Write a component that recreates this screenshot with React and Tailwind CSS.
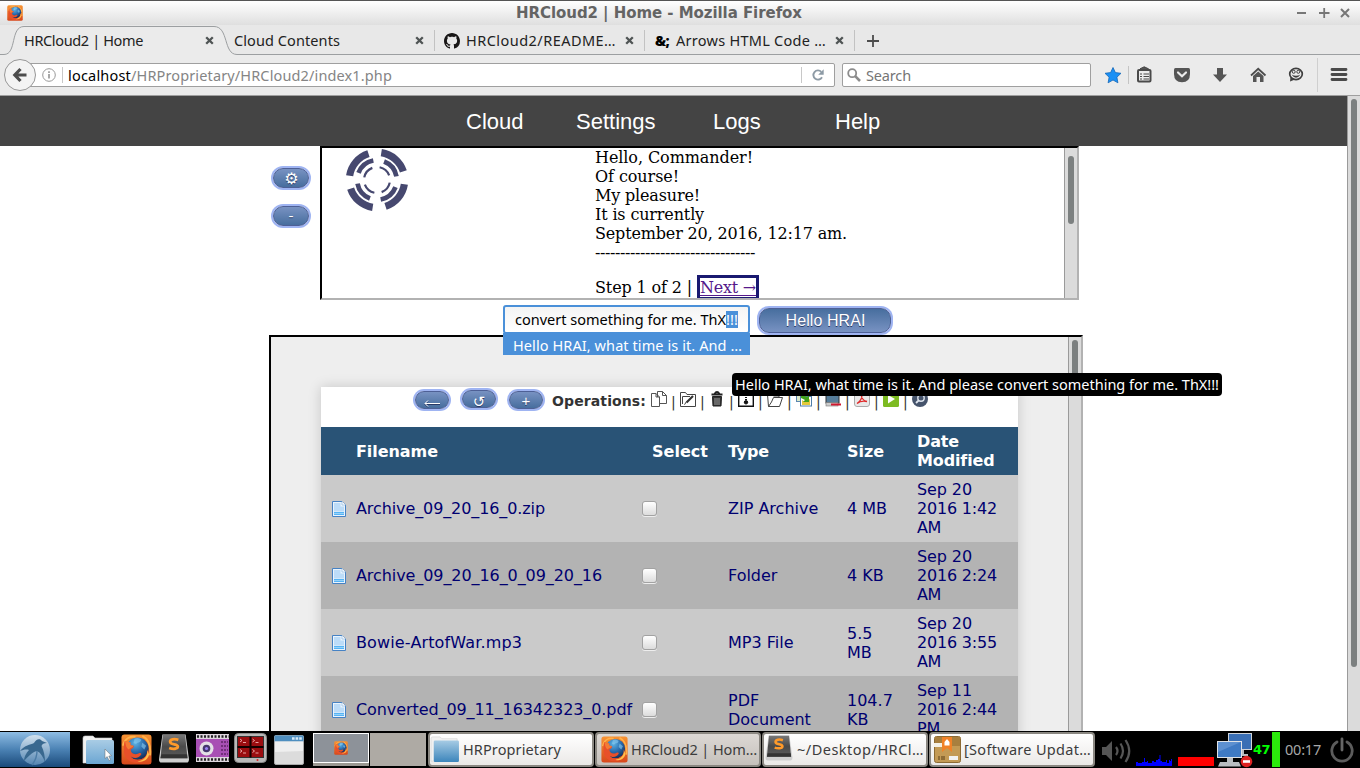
import React, { useLayoutEffect, useRef } from "react";

const UI = "font-['Noto_Sans','Open_Sans',sans-serif]";
const SANS = "font-['DejaVu_Sans',sans-serif]";

// Spreads a label's letters so that it takes exactly `w` pixels.
function Fit({ w, className = "", children }) {
  const ref = useRef(null);
  useLayoutEffect(() => {
    const el = ref.current;
    el.style.letterSpacing = "0px";
    const natural = el.getBoundingClientRect().width;
    el.style.letterSpacing = (w - natural) / el.textContent.length + "px";
  }, [w]);
  return (
    <span ref={ref} className={"inline-block whitespace-pre " + className}>
      {children}
    </span>
  );
}

function FirefoxIcon({ className }) {
  return (
    <svg viewBox="0 0 32 32" className={className}>
      <defs>
        <linearGradient id="ffbg" x1="0" y1="0" x2="0" y2="1">
          <stop offset="0" stopColor="#f79433" />
          <stop offset="1" stopColor="#d8471c" />
        </linearGradient>
        <radialGradient id="ffglobe" cx="0.4" cy="0.25" r="0.8">
          <stop offset="0" stopColor="#5fb4e4" />
          <stop offset="0.5" stopColor="#2a6cae" />
          <stop offset="1" stopColor="#13284f" />
        </radialGradient>
      </defs>
      <rect x="0.5" y="0.5" width="31" height="31" rx="3" fill="url(#ffbg)" />
      <path d="M2 12 C4 4 10 2 15 3 M22 2 C28 5 31 12 30 22" stroke="#ffb24a" strokeWidth="2" fill="none" />
      <circle cx="17" cy="15" r="11.5" fill="url(#ffglobe)" />
      <path d="M14 5 q4 -2 7 1 q-1 3 -4 3 q-2 2 -4 0z M22 9 l4 3 -2 4 -3 -3z" fill="#8accf0" opacity="0.6" />
      <path d="M4 7 C6 9 8 8 10 9 C9 11 10 12 13 12 C14 14 11 15 10 16 C10 20 14 22 18 20 C20 19 21 20 21 21 C19 25 13 26 10 23 C13 28 22 28 26 22 C27 20 27 18 27 16 C30 21 27 30 17 30 C8 30 2 24 3 15 C3 12 3 9 4 7Z" fill="#e8502a" />
      <path d="M4 7 C6 9 8 8 10 9 C9 11 10 12 13 12 C12 14 9 14 8 16 C5 14 5 11 4 7Z" fill="#f47b35" />
      <path d="M27 17 C28 23 23 28 17 28 C22 30 28 27 29 21z" fill="#ffc04a" />
    </svg>
  );
}

function SublimeIcon({ className }) {
  return (
    <svg viewBox="0 0 32 30" className={className}>
      <defs>
        <linearGradient id="subl" x1="0" y1="0" x2="0" y2="1">
          <stop offset="0" stopColor="#777" />
          <stop offset="0.5" stopColor="#4a4a4a" />
          <stop offset="1" stopColor="#5b5b5b" />
        </linearGradient>
      </defs>
      <path d="M4 0.5 H28 L31.5 26 Q31.5 29.5 29 29.5 H3 Q0.5 29.5 0.5 26Z" fill="#cfcfcf" />
      <path d="M4.5 1 H27.5 L30 25 H2Z" fill="url(#subl)" />
      <path d="M3 21 H29.5 L30 25 H2Z" fill="#333" />
      <path d="M20.5 6 C16 4.500 12 5.500 12 8 C12 11.500 20 10 20 13 C20 15.500 15 16 11 14.500" stroke="#ff9a2a" strokeWidth="2.900" fill="none" />
    </svg>
  );
}

function FolderIcon({ className, cursor }) {
  return (
    <svg viewBox="0 0 33 30" className={className}>
      <defs>
        <linearGradient id="fold" x1="0" y1="0" x2="0" y2="1">
          <stop offset="0" stopColor="#a6cbe4" />
          <stop offset="1" stopColor="#3c85bb" />
        </linearGradient>
        <linearGradient id="foldpale" x1="0" y1="0" x2="0" y2="1">
          <stop offset="0" stopColor="#a9cce5" />
          <stop offset="1" stopColor="#6ba6d2" />
        </linearGradient>
      </defs>
      <path d="M1 3 Q1 1 3 1 H11 L13 3 H30 V10 H6 V28 H1Z" fill="#f1f1f1" stroke="#cfcfcf" strokeWidth="0.6" />
      <rect x="4" y="5" width="28" height="24" rx="1.500" fill={cursor ? "url(#foldpale)" : "url(#fold)"} />
      {cursor && <path d="M23 14 L23 23.500 L25.200 21.600 L27 25.500 L28.500 24.800 L26.800 21 L29.500 20.800Z" fill="#fff" stroke="#666" strokeWidth="0.500" />}
    </svg>
  );
}

const CloseX = () => (
  <svg viewBox="0 0 9 9" className="h-[9px] w-[9px] shrink-0">
    <path d="M1.200 1.200 L7.800 7.800 M7.800 1.200 L1.200 7.800" stroke="#4f5454" strokeWidth="2.300" />
  </svg>
);

function TitleBar() {
  return (
    <div className="flex h-[25px] shrink-0 items-center border-t border-[#555] bg-linear-to-b from-white to-[#dfdfdf] pr-[9px] pl-[7px]">
      <FirefoxIcon className="h-4 w-4" />
      <div className={"ml-[493px] w-[290px] text-[15px] leading-6 font-bold text-[#646464] " + SANS}>
        <Fit w={286}>HRCloud2 | Home - Mozilla Firefox</Fit>
      </div>
      <svg viewBox="0 0 54 12" className="ml-auto h-3 w-[54px]">
        <path d="M0 6 H9 M22 6 H32.500 M27.200 1 V11" stroke="#777" strokeWidth="1.800" fill="none" />
        <path d="M44 2 L52 10 M52 2 L44 10" stroke="#777" strokeWidth="2" fill="none" />
      </svg>
    </div>
  );
}

function TabStrip() {
  return (
    <div className={"relative h-[30px] shrink-0 bg-[#e8e8e8] text-[14.500px] text-[#222] " + UI}>
      <svg viewBox="0 0 1360 30" className="absolute inset-0 h-[30px] w-[1360px]">
        <path d="M0 29.500 H4 C17 29.500 10 1.500 24 1.500 H214 C229 1.500 223 29.500 237 29.500 H1360 V31 H0Z" fill="#ebebeb" />
        <path d="M0 29.500 H4 C17 29.500 10 1.500 24 1.500 H214 C229 1.500 223 29.500 237 29.500 H1360" fill="none" stroke="#9c9fa1" />
        <path d="M434.500 5 V26 M644.500 5 V26 M854.500 5 V26" stroke="#c2c2c2" />
      </svg>
      <div className="relative flex h-[31px] items-center pl-6">
        <div className="flex w-[210px] items-center">
          <div className="w-[181px]"><Fit w={119}>HRCloud2 | Home</Fit></div>
          <CloseX />
        </div>
        <div className="flex w-[210px] items-center">
          <div className="w-[181px]"><Fit w={106}>Cloud Contents</Fit></div>
          <CloseX />
        </div>
        <div className="flex w-[210px] items-center">
          <svg viewBox="0 0 16 16" className="h-4 w-4">
            <path fill="#181616" d="M8 0C3.580 0 0 3.580 0 8c0 3.540 2.290 6.530 5.470 7.590.4.070.55-.17.55-.38 0-.19-.01-.82-.01-1.490-2.010.37-2.530-.49-2.690-.94-.09-.23-.48-.94-.82-1.130-.28-.15-.68-.52-.01-.53.63-.01 1.080.58 1.230.82.72 1.210 1.870.87 2.330.66.07-.52.28-.87.51-1.070-1.780-.2-3.640-.89-3.640-3.950 0-.87.31-1.590.82-2.150-.08-.2-.36-1.020.08-2.120 0 0 .67-.21 2.200.82.64-.18 1.320-.27 2-.27s1.360.09 2 .27c1.530-1.040 2.200-.82 2.200-.82.44 1.100.16 1.920.08 2.120.51.56.82 1.270.82 2.150 0 3.070-1.870 3.750-3.650 3.950.29.25.54.73.54 1.480 0 1.070-.01 1.930-.01 2.200 0 .21.15.46.55.38A8.010 8.010 0 0 0 16 8c0-4.420-3.580-8-8-8z" />
          </svg>
          <div className="ml-[6px] w-[159px]"><Fit w={150}>HRCloud2/README…</Fit></div>
          <CloseX />
        </div>
        <div className="flex w-[210px] items-center">
          <span className="w-[22px] pl-px text-[14px] font-black text-black"><Fit w={14}>&amp;;</Fit></span>
          <div className="w-[159px]"><Fit w={150}>Arrows HTML Code …</Fit></div>
          <CloseX />
        </div>
        <svg viewBox="0 0 12 12" className="ml-[3px] h-3 w-3">
          <path d="M6 0 V12 M0 6 H12" stroke="#4c4c4c" strokeWidth="1.800" />
        </svg>
      </div>
    </div>
  );
}

function NavBar() {
  return (
    <div className={"flex h-[41px] shrink-0 items-center border-b border-[#9f9f9f] bg-[#ebebeb] text-[14.500px] " + UI}>
      <div className="z-10 ml-1 flex h-8 w-8 items-center justify-center rounded-full border border-[#979797] bg-[#f3f3f3]">
        <svg viewBox="0 0 16 16" className="h-4 w-4">
          <path d="M8.500 2 L2.800 8 L8.500 14 M3 8 H14.500" stroke="#4c4c4c" strokeWidth="3.200" fill="none" />
        </svg>
      </div>
      <div className="-ml-2 flex h-6 w-[807px] items-center rounded-xs border border-[#9f9f9f] bg-white pl-[13px]">
        <svg viewBox="0 0 14 14" className="h-[14px] w-[14px]">
          <circle cx="7" cy="7" r="6.300" fill="none" stroke="#999" />
          <path d="M7 6 V10.500 M7 3.300 V4.900" stroke="#999" strokeWidth="1.700" />
        </svg>
        <div className="ml-[6px] h-4 w-px bg-[#c8c8c8]" />
        <div className="ml-[5px] flex items-center pt-px">
          <Fit w={63} className="text-black">localhost</Fit>
          <Fit w={261} className="text-[#858585]">/HRProprietary/HRCloud2/index1.php</Fit>
        </div>
        <div className="ml-auto h-4 w-px bg-[#c8c8c8]" />
        <svg viewBox="0 0 12 12" className="mr-[10px] ml-[10px] h-3 w-3">
          <path d="M10 8.300 A4.600 4.600 0 1 1 9.300 2.800" fill="none" stroke="#8d9aa5" strokeWidth="1.900" />
          <path d="M11.700 0.300 V5.800 H6.200Z" fill="#8d9aa5" />
        </svg>
      </div>
      <div className="ml-[7px] flex h-6 w-[249px] items-center rounded-xs border border-[#9f9f9f] bg-white pl-1">
        <svg viewBox="0 0 14 14" className="h-[14px] w-[14px]">
          <circle cx="5.200" cy="5.200" r="4" fill="none" stroke="#8c8c8c" strokeWidth="1.800" />
          <path d="M8.200 8.200 L13 13" stroke="#8c8c8c" strokeWidth="2.600" />
        </svg>
        <Fit w={45} className="ml-[5px] pt-px text-[#757575]">Search</Fit>
      </div>
      <svg viewBox="0 0 260 40" className="ml-[9px] h-10 w-[260px]">
        <path d="M13 12.500 L15.400 17.600 L21 18.300 L16.900 22.200 L17.900 27.800 L13 25 L8.100 27.800 L9.100 22.200 L5 18.300 L10.600 17.600Z" fill="#1a90f5" stroke="#1467b8" strokeWidth="0.800" />
        <path d="M28.500 11 V29" stroke="#c4c4c4" />
        <g fill="none" stroke="#4a4a4a">
          <rect x="38" y="15" width="12.500" height="11.500" rx="1" strokeWidth="2" />
          <path d="M40 19 H42 M43.500 19 H49 M40 21.500 H42 M43.500 21.500 H49 M40 24 H42 M43.500 24 H49" strokeWidth="1.200" />
          <path d="M40 13.800 H48.500 L44.200 11.800Z" fill="#4a4a4a" />
        </g>
        <path d="M74 14.500 Q74 13 75.500 13 H88.500 Q90 13 90 14.500 V19 Q90 27 82 27.300 Q74 27 74 19Z" fill="#555" />
        <path d="M78 17.500 L82 21.300 L86 17.500" stroke="#ececec" strokeWidth="2.200" fill="none" strokeLinecap="round" />
        <path d="M117 13 H123 V19.500 H127 L120 27 L113 19.500 H117Z" fill="#555" />
        <path d="M151 20.500 L158.200 13.800 L165.500 20.500" fill="none" stroke="#4c4c4c" strokeWidth="1.800" />
        <path d="M153 21 L158.200 16.500 L163.500 21 V27 H160 V22 H156.500 V27 H153Z" fill="#555" />
        <ellipse cx="196" cy="19" rx="6.300" ry="5.600" fill="none" stroke="#3f3f3f" strokeWidth="1.700" />
        <path d="M190.500 22 L190 26.500 L195 24.500Z" fill="#3f3f3f" />
        <path d="M191.500 19.500 Q196 26 200.500 19.500 Q196 22 191.500 19.500Z" fill="#3f3f3f" />
        <circle cx="193.700" cy="16.800" r="1.500" fill="none" stroke="#3f3f3f" />
        <circle cx="198.300" cy="16.800" r="1.500" fill="none" stroke="#3f3f3f" />
        <path d="M217.500 3 V37" stroke="#cfcfcf" />
        <path d="M232 14.500 H246 M232 19.500 H246 M232 24.500 H246" stroke="#4a4a4a" strokeWidth="2.800" strokeLinecap="round" />
      </svg>
    </div>
  );
}

function Pill({ className = "", children }) {
  return (
    <button
      className={
        "flex shrink-0 items-center justify-center rounded-[10px] border border-[#4e6096] text-white shadow-[0_0_0_2px_#9fb4f2] [text-shadow:0_1px_0_#283966] " +
        className
      }
    >
      {children}
    </button>
  );
}

const SMALL = "bg-linear-to-b from-[#7892c2] to-[#476e9e] ";

function AssistantFrame() {
  const serif = "font-['DejaVu_Serif',serif]";
  return (
    <div className="flex h-[154px] w-[759px] border-2 border-t-black border-r-[#b2b2b2] border-b-[#b2b2b2] border-l-black bg-white">
      <div className="flex min-w-0 flex-1 overflow-hidden">
        <svg viewBox="-32 -32 64 64" className="ml-[23px] h-16 w-16 shrink-0" fill="none" stroke="#46486f">
          <circle r="27.700" pathLength="360" strokeWidth="7.200" strokeDasharray="63 27" strokeDashoffset="-9" />
          <circle r="19.800" pathLength="360" strokeWidth="4.700" strokeDasharray="58 32" strokeDashoffset="-21" />
          <circle r="13" pathLength="360" strokeWidth="2.200" strokeDasharray="57 33" strokeDashoffset="-12" />
        </svg>
        <div className={"ml-[186px] text-[16px] leading-[19px] whitespace-nowrap text-black " + serif}>
          <p><Fit w={158}>Hello, Commander!</Fit></p>
          <p><Fit w={84}>Of course!</Fit></p>
          <p><Fit w={105}>My pleasure!</Fit></p>
          <p><Fit w={109}>It is currently</Fit></p>
          <p><Fit w={252}>September 20, 2016, 12:17 am.</Fit></p>
          <p><Fit w={160}>--------------------------------</Fit></p>
          <div className="mt-[13px] flex">
            <span className="pt-[3px] whitespace-pre"><Fit w={102}>Step 1 of 2 | </Fit></span>
            <span className="border-[3px] border-[#191970] text-[#551a8b]"><Fit w={56} className="underline underline-offset-2">Next →</Fit></span>
          </div>
        </div>
      </div>
      <div className="w-[13px] border-l border-[#9a9a9a] bg-[#dbdbdb] pt-2 pl-[3px]">
        <div className="h-[68px] w-[6px] rounded-full bg-[#7c8080]" />
      </div>
    </div>
  );
}

const FILES = [
  ["Archive_09_20_16_0.zip", 189, "ZIP Archive", "4 MB", [["Sep 20", 55], ["2016 1:42", 80], ["AM", 24]]],
  ["Archive_09_20_16_0_09_20_16", 246, "Folder", "4 KB", [["Sep 20", 55], ["2016 2:24", 80], ["AM", 24]]],
  ["Bowie-ArtofWar.mp3", 166, "MP3 File", "5.5 MB", [["Sep 20", 55], ["2016 3:55", 80], ["AM", 24]]],
  ["Converted_09_11_16342323_0.pdf", 276, "PDF Document", "104.7 KB", [["Sep 11", 55], ["2016 2:44", 80], ["PM", 23]]],
];

const OPS = [
  <g key="copy" fill="#fff" stroke="#555">
    <path d="M6.500 0.500 H11.500 L15.500 4.500 V12.500 H6.500Z M11.500 0.500 V4.500 H15.500" />
    <path d="M0.500 2.500 H5 L8.500 6 V15.500 H0.500Z M5 2.500 V6 H8.500" />
  </g>,
  <g key="edit" fill="none" stroke="#444">
    <path d="M0.500 15.500 V1.500 H5.500 L7 3.500 H15.500 V15.500Z M2.500 13 V5.500 H10" />
    <path d="M6.500 11.500 L13 5" strokeWidth="2.200" stroke="#333" />
    <path d="M4.500 13.700 L6.200 11" />
  </g>,
  <g key="trash" fill="none" stroke="#222">
    <path d="M2.500 3.500 H13.500 M5.500 3 Q8 -1 10.500 3" strokeWidth="1.800" />
    <path d="M3.500 5.500 H12.500 L12 15 H4Z" fill="#333" />
    <path d="M6 7 V14 M8 7 V14 M10 7 V14" stroke="#bbb" strokeWidth="0.800" />
  </g>,
  <g key="zip" fill="none" stroke="#111">
    <path d="M0.700 3 H15.300 V15.300 H0.700Z" strokeWidth="1.400" />
    <path d="M8 4 V9" strokeWidth="2" strokeDasharray="1 1" />
    <circle cx="8" cy="11.300" r="1.700" fill="#111" />
  </g>,
  <path key="open" d="M1.500 15.500 L0.500 3.500 H5 L6.500 5 H12 V6.500 M1.500 15.500 H12.500 L15.500 6.500 H6.500 L4.500 11 L1.500 15.500" fill="none" stroke="#444" />,
  <g key="image">
    <rect x="0.500" y="1.500" width="11" height="9" fill="#dce9c8" stroke="#5b86b0" />
    <rect x="4.500" y="5.500" width="11" height="9.500" fill="#fff" stroke="#4f7da8" />
    <path d="M6 14 V9 L9 11 L14 8 V14Z" fill="#e4c93b" />
    <path d="M5 3 L11 6 L13 4 L13 11 L7 11 L9 9 L5 7Z" fill="#3fa01b" />
  </g>,
  <g key="scan">
    <rect x="1" y="2" width="13" height="10" fill="#567d9a" stroke="#333" />
    <rect x="1" y="11.500" width="12" height="3.500" fill="#ccc" stroke="#777" strokeWidth="0.600" />
    <path d="M6 13.500 H16" stroke="#d01830" strokeWidth="2" />
  </g>,
  <g key="pdf">
    <rect x="0.500" y="0.500" width="15" height="15" rx="2.500" fill="#e9e9e9" stroke="#aaa" />
    <path d="M3 12.500 C7 10 8.500 6 7.500 3.500 C7 6 9 10 13 10.500 C9 9.500 5.500 10.500 3 12.500Z" fill="none" stroke="#e02a2a" strokeWidth="1.300" />
  </g>,
  <g key="play">
    <rect width="16" height="16" rx="1.500" fill="#7dbb22" />
    <path d="M5 4 L12 8 L5 12.500Z" fill="#fff" />
  </g>,
  <g key="search">
    <circle cx="8" cy="8" r="8" fill="#46546c" />
    <circle cx="9" cy="7" r="3.200" fill="none" stroke="#dfe5ee" strokeWidth="1.400" />
    <path d="M6.700 9.300 L4 12" stroke="#dfe5ee" strokeWidth="1.800" />
  </g>,
];

const COLS = "grid grid-cols-[35px_286px_86px_119px_70px_101px] items-center";

function FilesFrame() {
  return (
    <div className="ml-[269px] flex h-[396px] w-[814px] border-2 border-b-0 border-t-black border-r-[#b2b2b2] border-l-black bg-[#eee]">
      <div className={"min-w-0 flex-1 overflow-hidden pt-[50px] pl-[50px] text-[16px] leading-[19px] " + SANS}>
        <div className="h-[420px] w-[697px] bg-white shadow-[0_0_12px_rgba(0,0,0,0.17)]">
          <div className="flex h-10 items-start pl-[94px] text-[16px]">
            <Pill className={SMALL + "mt-1 mr-[13px] h-[18px] w-[34px]"}>
              <svg viewBox="0 0 16 8" className="mt-[7px] h-2 w-4">
                <path d="M4 1.500 L1 4.500 L4 7.500 M1 4.500 H16" stroke="#283966" fill="none" />
                <path d="M4 0.500 L1 3.500 L4 6.500 M1 3.500 H16" stroke="#fff" fill="none" />
              </svg>
            </Pill>
            <Pill className={SMALL + "mt-[3px] mr-[13px] h-[18px] w-[34px] pt-[6px] text-[15px] leading-none"}>↺</Pill>
            <Pill className={SMALL + "mt-1 mr-[9px] h-[18px] w-[34px] pt-px font-['Liberation_Sans'] text-[15px] leading-none"}>+</Pill>
            <div className="mt-[5px] w-[99px] text-[14px] font-bold text-[#333]"><Fit w={94}>Operations:</Fit></div>
            <div className="mt-1 flex">
              {OPS.map((art, i) => (
                <div key={i} className="flex w-[29px] items-start">
                  <svg viewBox="0 0 16 16" className="h-4 w-4 shrink-0">{art}</svg>
                  {i < OPS.length - 1 && <span className="ml-1 pt-[3px] text-[14px] leading-[16px] text-[#333]">|</span>}
                </div>
              ))}
            </div>
          </div>
          <div className={COLS + " h-12 bg-[#295376] font-bold text-white"}>
            <span />
            <span><Fit w={82}>Filename</Fit></span>
            <span className="pl-[10px]"><Fit w={56}>Select</Fit></span>
            <span><Fit w={41}>Type</Fit></span>
            <span><Fit w={37}>Size</Fit></span>
            <span><Fit w={42}>Date</Fit><br /><Fit w={77}>Modified</Fit></span>
          </div>
          {FILES.map(([name, w, type, size, date], i) => (
            <div key={name} className={COLS + " h-[67px] text-[#000070] " + (i % 2 ? "bg-[#b3b3b3]" : "bg-[#cacaca]")}>
              <svg viewBox="0 0 14 16" className="mt-px ml-[11px] h-4 w-[14px]">
                <path d="M0.500 0.500 H10 L13.500 4 V15.500 H0.500Z" fill="#eaf4fd" stroke="#4682c4" />
                <path d="M2 2 H8.500 V5.500 H12 V10.500 H2Z" fill="#bcdcf8" />
                <path d="M10 0.500 V4 H13.500" fill="#fff" stroke="#8fb8e0" strokeWidth="0.700" />
                <path d="M2 11 H12 V14 H2Z" fill="#55b4f5" />
                <path d="M2 12.500 H12" stroke="#b5e0fb" strokeWidth="0.700" />
              </svg>
              <span><Fit w={w}>{name}</Fit></span>
              <span className="block h-[15px] w-[15px] rounded-[3px] border border-[#a2a2a2] bg-linear-to-b from-white to-[#dcdcdc] shadow-[0_1px_0_#eee]" />
              <span className="pr-7">{type}</span>
              <span className="pr-4">{size}</span>
              <span>{date.map(([d, dw]) => <span key={d} className="block"><Fit w={dw}>{d}</Fit></span>)}</span>
            </div>
          ))}
        </div>
      </div>
      <div className="w-[13px] border-l border-[#9a9a9a] bg-[#dbdbdb] pt-[3px] pl-[3px]">
        <div className="h-[50px] w-[6px] rounded-full bg-[#7c8080]" />
      </div>
    </div>
  );
}

function Page() {
  return (
    <div className="relative h-[635px] w-[1347px] overflow-hidden bg-white">
      <nav className="flex h-[50px] items-center bg-[#444] pl-[466px] font-['Liberation_Sans',Arial,sans-serif] text-[22px] text-white">
        <span className="w-[110px]">Cloud</span>
        <span className="w-[137px]">Settings</span>
        <span className="w-[122px]">Logs</span>
        <span>Help</span>
      </nav>
      <div className={"flex pl-[273px] " + SANS}>
        <div className="w-[47px] pt-[22px]">
          <Pill className={SMALL + "h-5 w-9 text-[16px]"}>
            <span className="pt-[2px] pl-px">⚙</span>
          </Pill>
          <Pill className={SMALL + "mt-[18px] h-5 w-9 font-['Liberation_Sans'] text-[15px]"}>-</Pill>
        </div>
        <AssistantFrame />
      </div>
      <div className="flex h-[35px] pt-[5px] pl-[503px]">
        <div className={"relative h-[30px] w-[247px] text-[14.500px] " + UI}>
          <div className="flex h-[29px] items-center rounded-[3px] border-2 border-[#4a90d9] bg-linear-to-b from-[#f4f4f4] to-white pl-[10px] text-black">
            <Fit w={211}>convert something for me. ThX</Fit>
            <span className="inline-block h-[17px] bg-[#4a90d9] leading-[17px] text-white"><Fit w={12}>!!!</Fit></span>
          </div>
          <div className="absolute top-[28px] left-0 z-20 h-[22px] w-[247px] bg-[#4a90d9] pl-[10px] leading-[24px] text-white">
            <Fit w={229}>Hello HRAI, what time is it. And …</Fit>
          </div>
        </div>
        <Pill className="mt-[3px] ml-[9px] h-[25px] w-[132px] bg-linear-to-b from-[#476e9e] to-[#7892c2] font-['Liberation_Sans',Arial,sans-serif] text-[16px]">
          <Fit w={81} className="pl-px">Hello HRAI</Fit>
        </Pill>
      </div>
      <FilesFrame />
      <div className={"absolute top-[277px] left-[732px] z-30 h-[23px] w-[490px] rounded-[4px] bg-black pl-[3px] text-[14.500px] leading-[23px] text-white " + UI}>
        <Fit w={484}>Hello HRAI, what time is it. And please convert something for me. ThX!!!</Fit>
      </div>
    </div>
  );
}

function Task({ icon, label, w, active, className = "" }) {
  return (
    <div
      className={
        "flex h-[35px] items-center overflow-hidden rounded-[4px] border-2 border-[#8a8781] pl-1 text-[14.500px] text-[#3c3c3c] " +
        (active ? "bg-linear-to-b from-[#dcd8d4] to-[#c6c1bc] " : "bg-linear-to-b from-white to-[#ebe9e7] ") +
        className
      }
    >
      {icon}
      <Fit w={w} className="ml-[3px]">{label}</Fit>
    </div>
  );
}

function Taskbar() {
  return (
    <div className={"flex h-[37px] shrink-0 items-center bg-black " + UI}>
      <div className="flex h-[35px] w-[70px] items-center justify-center bg-linear-to-b from-[#8fbde4] via-[#4b82b4] to-[#1a4a7a]">
        <svg viewBox="0 0 32 32" className="h-8 w-8">
          <defs>
            <linearGradient id="disc" x1="0" y1="0" x2="0" y2="1">
              <stop offset="0" stopColor="#dfe9f1" />
              <stop offset="1" stopColor="#5f8fba" />
            </linearGradient>
          </defs>
          <circle cx="16" cy="16" r="15" fill="url(#disc)" opacity="0.850" />
          <path d="M1 17 C6 11 11 11 15 9 C17 5 21 4 23 7 L28 9 C25 9 23 10 22.500 12 C25 17 26 22 26 28 C24 23 22 19 18 17 C13 18 8 24 5 27 C5 23 7 19 10 16 C7 15 4 16 1 17Z" fill="#39688f" />
          <path d="M18 17 C18 22 16 27 13 31" stroke="#4b7ba5" strokeWidth="1.400" fill="none" />
        </svg>
      </div>
      <FolderIcon cursor className="ml-3 h-[30px] w-[33px]" />
      <FirefoxIcon className="ml-[6px] h-[31px] w-[31px]" />
      <SublimeIcon className="-mt-[3px] ml-[6px] h-[29px] w-[32px]" />
      <svg viewBox="0 0 33 28" className="-mt-[3px] ml-[6px] h-7 w-[33px]">
        <rect width="33" height="28" fill="#ded6de" />
        <path d="M1 2.500 H33 M1 25.500 H33" stroke="#222" strokeWidth="2.600" strokeDasharray="2 1.500" />
        <rect x="0" y="5" width="33" height="18" fill="#a84fb4" />
        <path d="M25 8 H32 M25 12 H32 M25 16 H32 M25 20 H32" stroke="#602468" strokeWidth="1.500" strokeDasharray="2 1" />
        <circle cx="10.500" cy="14.500" r="7" fill="#e4e0e6" />
        <circle cx="10.500" cy="14.500" r="3.800" fill="#45366e" />
        <circle cx="10.500" cy="14.500" r="1.600" fill="#9a83f5" />
      </svg>
      <svg viewBox="0 0 33 30" className="-mt-[3px] ml-[5px] h-[30px] w-[33px]">
        <rect x="0.500" y="0.500" width="32" height="29" rx="4" fill="#b9b9b9" stroke="#888" />
        <rect x="3.500" y="3.500" width="26" height="21" fill="#9b0d10" stroke="#333" />
        <path d="M16.500 3.500 V24.500 M3.500 14 H29.500" stroke="#140000" strokeWidth="2" />
        <path d="M6 6 L8 7.500 L6 9 M18.500 6 L20.500 7.500 L18.500 9 M6 16.500 L8 18 L6 19.500 M18.500 16.500 L20.500 18 L18.500 19.500 M9 9.500 H12 M21.500 9.500 H24.500 M9 20 H12 M21.500 20 H24.500" stroke="#f2b3b3" strokeWidth="0.900" fill="none" />
        <circle cx="23.500" cy="27" r="1" fill="#d22" />
      </svg>
      <svg viewBox="0 0 30 30" className="ml-[7px] h-[30px] w-[30px]">
        <rect x="0.500" y="0.500" width="29" height="29" rx="1.500" fill="#dcdcdc" stroke="#aaa" />
        <rect x="0.500" y="0.500" width="29" height="6" fill="#4f8fc0" />
        <path d="M18 3.500 H28" stroke="#d9ebf8" strokeWidth="2.400" strokeDasharray="2.600 1" />
        <path d="M1 6.500 H29 V16 L1 17Z" fill="#efefef" />
      </svg>
      <div className="ml-[9px] flex h-[33px] w-[56px] flex-col border-b-[3px] border-[#9b9892]">
        <div className="flex h-[30px] items-center justify-center border border-white bg-[#8d9299]">
          <FirefoxIcon className="h-[14px] w-[14px]" />
        </div>
      </div>
      <div className="ml-px h-[33px] w-[56px] bg-[#aeaaa4]" />
      <Task className="ml-[2px] w-[166px]" w={98} label="HRProprietary" icon={<FolderIcon className="-ml-1 h-[27px] w-[30px] shrink-0" />} />
      <Task className="ml-px w-[166px]" active w={126} label="HRCloud2 | Hom…" icon={<FirefoxIcon className="h-[27px] w-[27px] shrink-0" />} />
      <Task className="ml-px w-[166px]" w={127} label="~/Desktop/HRCl…" icon={<SublimeIcon className="-mt-1 -ml-1 h-[26px] w-[30px] shrink-0" />} />
      <Task
        className="ml-px w-[166px]"
        w={127}
        label="[Software Updat…"
        icon={
          <svg viewBox="0 0 27 27" className="-ml-px h-[27px] w-[27px] shrink-0">
            <rect x="0.500" y="0.500" width="26" height="26" rx="2" fill="#c39a55" stroke="#8c6a33" />
            <rect x="1" y="1" width="25" height="9" fill="#a87f3e" />
            <rect x="0" y="7" width="8" height="4" fill="#f4f0e6" />
            <path d="M8 1 H18 V16 L13 12 L8 16Z" fill="#f08228" />
            <path d="M13 3 L15.500 6 V9.500 H10.500 V6Z" fill="#fff" />
            <path d="M5 20 V24 M8 20 V24 M10 20 V24" stroke="#7c5d2c" strokeWidth="1.500" />
            <rect x="15" y="20" width="9" height="4" fill="#f2f2f2" />
          </svg>
        }
      />
      <svg viewBox="0 0 30 28" className="mt-[3px] ml-[7px] h-7 w-[30px]">
        <path d="M0 10 H4 L10 4 V24 L4 18 H0Z" fill="#555" />
        <path d="M14 10 Q17 14 14 18 M18.500 6.500 Q23.500 14 18.500 21.500 M23.500 3 Q31 14 23.500 25" fill="none" stroke="#565656" strokeWidth="2.200" />
      </svg>
      <svg viewBox="0 0 36 34" className="ml-1 h-[34px] w-9">
        <path d="M0 33 V29 H2 V30 H6 V29 H8 V25 H9 V29 H11 V28 H12 V30 H16 V28 H18 V29 H20 V27 H22 V26 H23.500 V22 H24.500 V28 H26 V29 H30 V27 H31 V30 H33 V27 H34 V28 H35 V26 H36 V33Z" fill="#0000ff" />
      </svg>
      <div className="ml-[6px] h-[9px] w-9 translate-y-[12px] bg-[#f00]" />
      <svg viewBox="0 0 36 36" className="ml-[3px] h-9 w-9">
        <rect x="11.500" y="1.500" width="23" height="16" fill="#3a6fb5" stroke="#cfd3d8" />
        <path d="M21 18 H27 V22 H31 V24 H18Z" fill="#b9bcc0" />
        <rect x="0.500" y="9.500" width="24" height="16" fill="#3f7ac4" stroke="#dfe2e6" />
        <path d="M1 10 H24 L1 20Z" fill="#7ba6dc" opacity="0.500" />
        <path d="M10 26 H16 V30 H22 L24 34.500 H1 L3 30 H10Z" fill="#b9bcc0" />
        <circle cx="29.500" cy="29.500" r="5.800" fill="#dd2222" />
        <path d="M26 29.500 H33" stroke="#fff" strokeWidth="2.600" />
      </svg>
      <div className={"w-[19px] text-[13px] font-bold text-[#0f0] " + SANS}><Fit w={17}>47</Fit></div>
      <div className="h-[35px] w-2 bg-[#2bea0b]" />
      <div className="ml-[5px] w-9 text-[14.500px] text-[#a8a8a8]"><Fit w={36}>00:17</Fit></div>
      <svg viewBox="0 0 24 26" className="ml-[9px] h-[26px] w-6">
        <path d="M7 5 A10.200 10.200 0 1 0 17 5" fill="none" stroke="#5c5c5c" strokeWidth="2.800" strokeLinecap="round" />
        <path d="M12 2 V13" stroke="#666" strokeWidth="2.800" strokeLinecap="round" />
      </svg>
    </div>
  );
}

export default function App() {
  return (
    <div className="flex h-[768px] w-[1360px] flex-col overflow-hidden bg-white">
      <TitleBar />
      <TabStrip />
      <NavBar />
      <div className="flex h-[635px] shrink-0">
        <Page />
        <div className="w-[13px] border-l border-[#9a9a9a] bg-[#dbdbdb] pt-[3px] pl-[3px]">
          <div className="h-[568px] w-[6px] rounded-full bg-[#7c8080]" />
        </div>
      </div>
      <Taskbar />
    </div>
  );
}
